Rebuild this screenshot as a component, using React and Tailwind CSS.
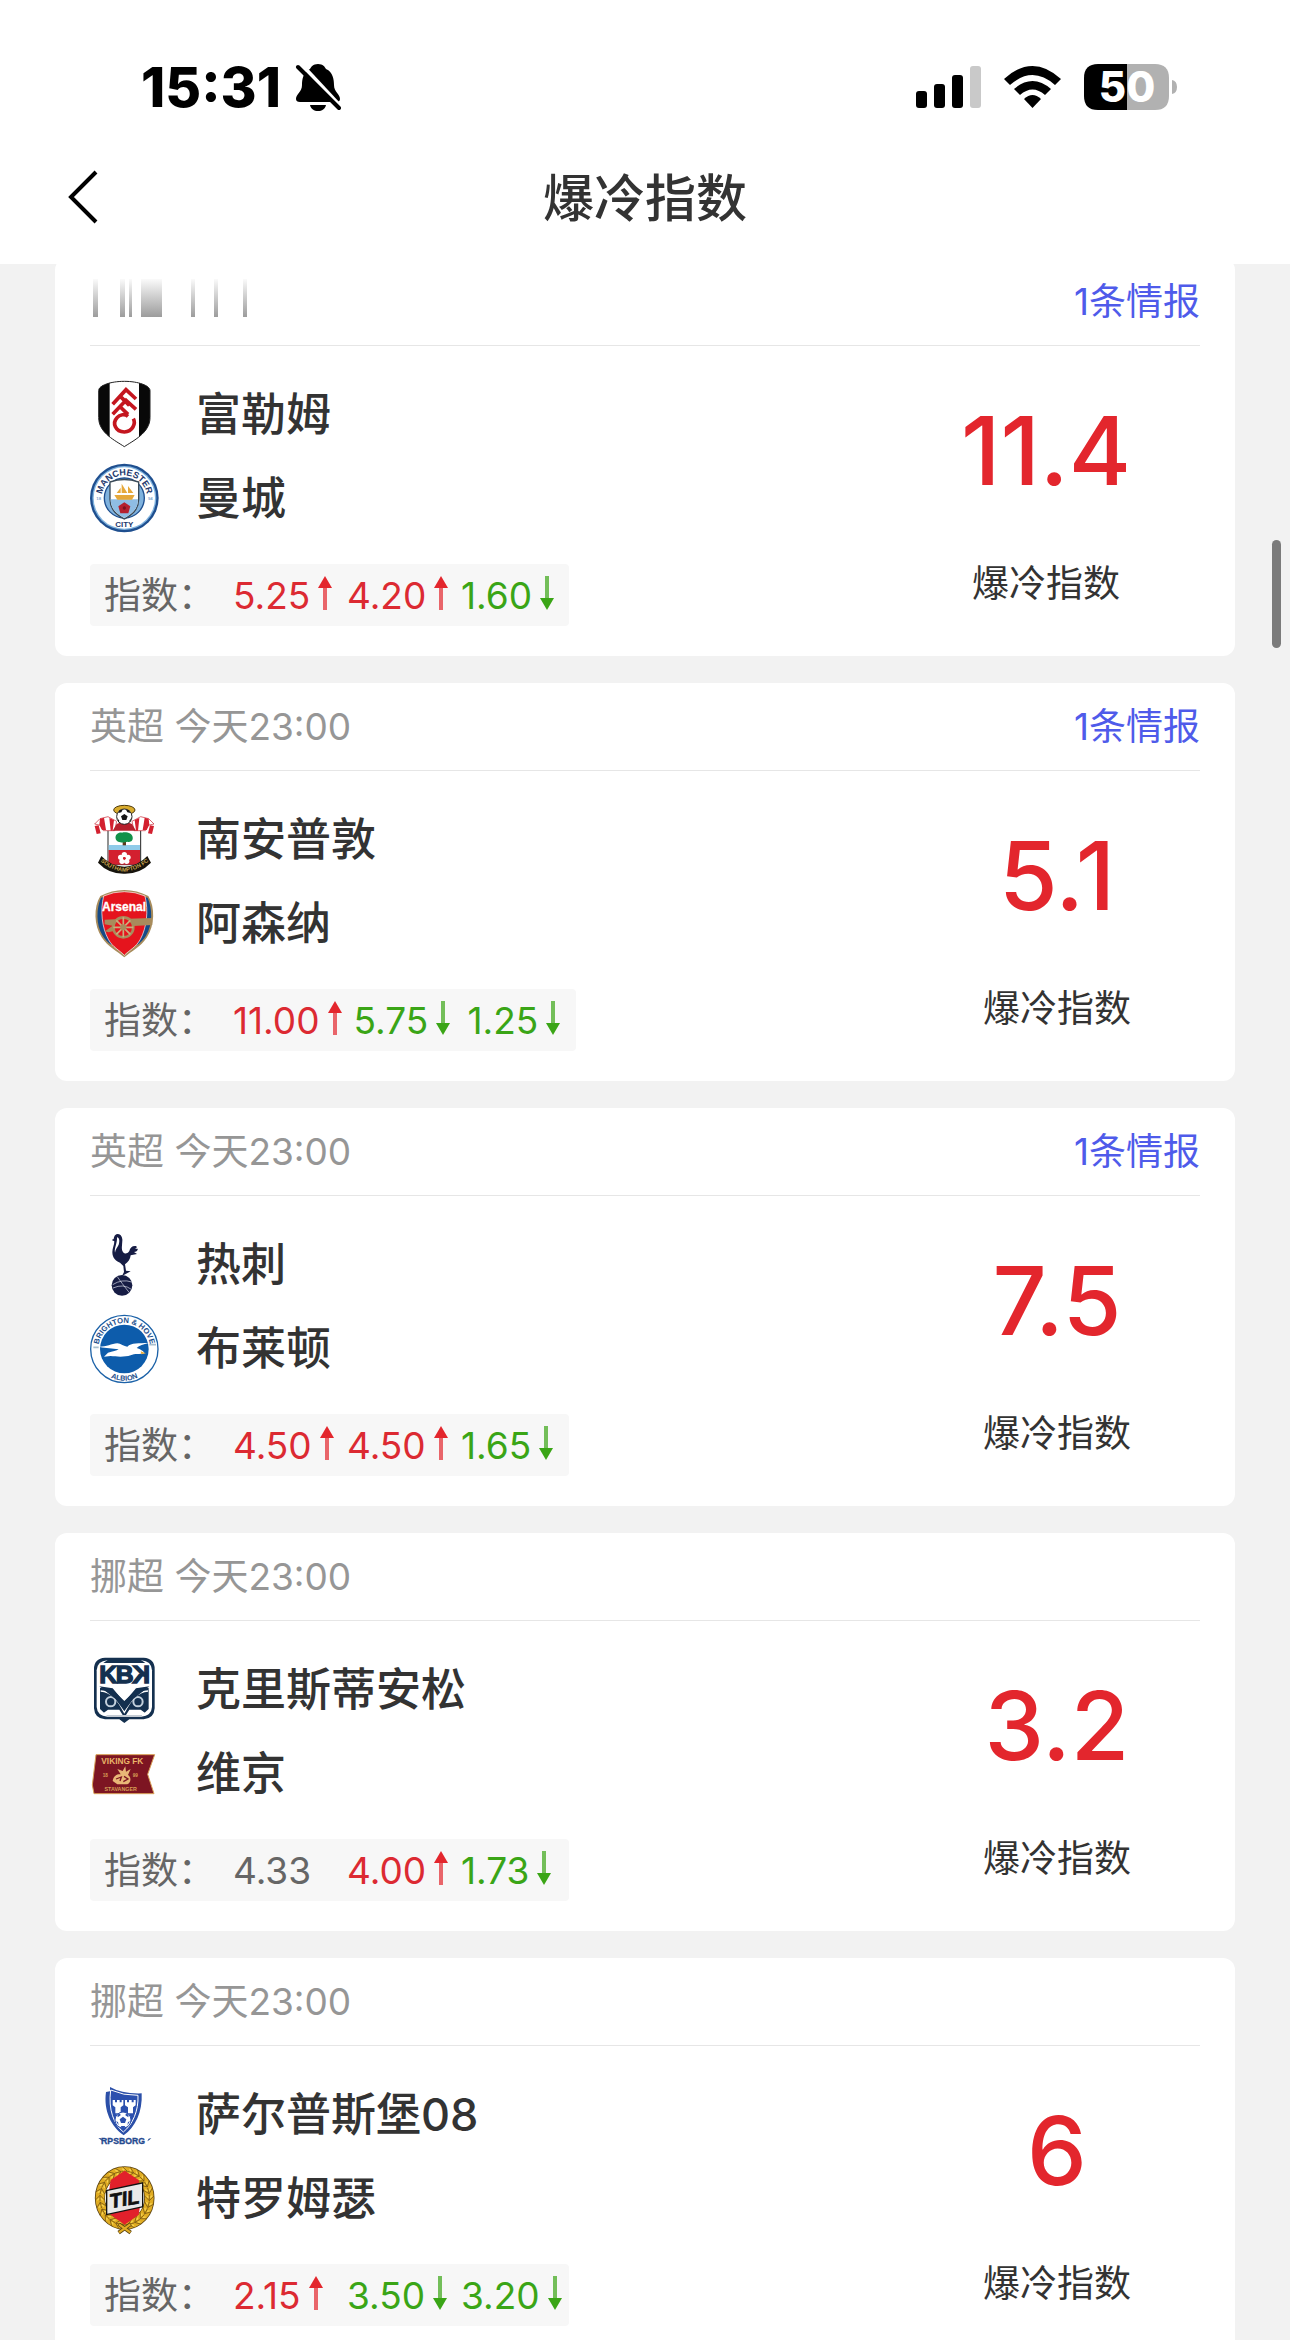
import { useState } from "react";

const matches = [
  {
    id: 1,
    league: null,
    intel: "1条情报",
    home: "富勒姆",
    away: "曼城",
    homeCrest: Fulham,
    awayCrest: ManCity,
    odds: [
      ["5.25", "up"],
      ["4.20", "up"],
      ["1.60", "down"],
    ],
    score: "11.4",
  },
  {
    id: 2,
    league: "英超 今天23:00",
    intel: "1条情报",
    home: "南安普敦",
    away: "阿森纳",
    homeCrest: Southampton,
    awayCrest: Arsenal,
    odds: [
      ["11.00", "up"],
      ["5.75", "down"],
      ["1.25", "down"],
    ],
    score: "5.1",
  },
  {
    id: 3,
    league: "英超 今天23:00",
    intel: "1条情报",
    home: "热刺",
    away: "布莱顿",
    homeCrest: Tottenham,
    awayCrest: Brighton,
    odds: [
      ["4.50", "up"],
      ["4.50", "up"],
      ["1.65", "down"],
    ],
    score: "7.5",
  },
  {
    id: 4,
    league: "挪超 今天23:00",
    home: "克里斯蒂安松",
    away: "维京",
    homeCrest: Kristiansund,
    awayCrest: Viking,
    odds: [
      ["4.33", null],
      ["4.00", "up"],
      ["1.73", "down"],
    ],
    score: "3.2",
  },
  {
    id: 5,
    league: "挪超 今天23:00",
    home: "萨尔普斯堡08",
    away: "特罗姆瑟",
    homeCrest: Sarpsborg,
    awayCrest: Tromso,
    odds: [
      ["2.15", "up"],
      ["3.50", "down"],
      ["3.20", "down"],
    ],
    score: "6",
  },
];

/* ---------- club crests ---------- */

function Crest({ top, label, children }) {
  return (
    <svg
      viewBox={`30 ${top} 210 210`}
      className="size-[70px] shrink-0 overflow-visible"
      role="img"
      aria-label={label}
      fontFamily="Liberation Sans, sans-serif"
      fontWeight="700"
    >
      {children}
    </svg>
  );
}

function Fulham() {
  const shield =
    "M56 58C57 44 90 31 133 31S209 44 210 58V140C210 186 158 210 133 227C108 210 56 186 56 140Z";
  return (
    <Crest top={24} label="Fulham">
      <clipPath id="fulham">
        <path d={shield} />
      </clipPath>
      <path d={shield} fill="#fff" />
      <g clipPath="url(#fulham)">
        <path d="M50 25H89V215H50zM177 25H220V215H177z" fill="#080808" />
      </g>
      <path d={shield} fill="none" stroke="#222" strokeWidth="3" />
      <g fill="none" stroke="#c4161f" strokeWidth="11">
        <path d="M98 100L138 56L168 84M121 76L148 103" />
        <path d="M98 130L138 88L168 115M121 108L144 130" />
        <path d="M160 143C168 158 158 181 133 183C106 183 96 156 111 140C119 130 135 128 144 136" />
      </g>
    </Crest>
  );
}

function ManCity() {
  return (
    <Crest top={276} label="Manchester City">
      <circle cx="133" cy="381" r="103" fill="#1f4f8f" />
      <circle cx="133" cy="381" r="96" fill="#7fb2de" />
      <circle cx="133" cy="381" r="92" fill="#fff" />
      <circle cx="133" cy="381" r="60" fill="#7fb2de" stroke="#1f4f8f" strokeWidth="4" />
      <path id="mcTop" d="M65 381A68 68 0 0 1 201 381" fill="none" />
      <text fontSize="27" fill="#253a6e" textAnchor="middle">
        <textPath href="#mcTop" startOffset="50%">MANCHESTER</textPath>
      </text>
      <path d="M90 333Q133 318 176 333V385C176 420 150 434 133 444C116 434 90 420 90 385Z" fill="#fff" stroke="#3b4a57" strokeWidth="4" />
      <path d="M92 385H174C174 418 150 431 133 441C116 431 92 418 92 385Z" fill="#8fbde4" />
      <path d="M103 372H164L156 386H112ZM110 366L122 350V366ZM125 366V338L142 366ZM144 366V345L160 366Z" fill="#e5a83b" />
      <path d="M133 394L151 406L145 427H121L115 406Z" fill="#b5202e" />
      <circle cx="133" cy="411" r="5" fill="#7a1220" />
      <text x="133" y="467" fontSize="24" fill="#253a6e" textAnchor="middle">CITY</text>
      <text x="56" y="386" fontSize="13" fill="#7fa6cf" textAnchor="middle">18</text>
      <text x="211" y="386" fontSize="13" fill="#7fa6cf" textAnchor="middle">94</text>
    </Crest>
  );
}

function Southampton() {
  return (
    <Crest top={24} label="Southampton">
      <path d="M84 100H182V206H84z" fill="#fff" stroke="#222" strokeWidth="3" />
      <path d="M86 147H180V162H86z" fill="#8fcbe9" />
      <path d="M86 162H180V206H86z" fill="#d3202f" />
      <path d="M128 130H138V148H128z" fill="#5c3a1e" />
      <path d="M107 128C104 116 116 108 126 110C138 106 158 112 158 124C160 136 150 140 142 137C132 141 110 141 107 128Z" fill="#12914a" />
      <g fill="#fff">
        <circle cx="133" cy="176" r="8" />
        <circle cx="122" cy="184" r="8" />
        <circle cx="144" cy="184" r="8" />
        <circle cx="126" cy="196" r="8" />
        <circle cx="140" cy="196" r="8" />
      </g>
      <circle cx="133" cy="187" r="4" fill="#d3202f" />
      <path d="M60 68L84 62L110 76L104 104L70 104L62 88L44 84Z" fill="#fff" stroke="#c9202e" strokeWidth="2" />
      <path d="M206 68L182 62L156 76L162 104L196 104L204 88L222 84Z" fill="#fff" stroke="#c9202e" strokeWidth="2" />
      <path d="M60 68L72 65L78 102H66L58 86ZM88 66L102 72L98 104H92ZM44 90L56 88L62 112L50 114ZM206 68L194 65L188 102H200L208 86ZM178 66L164 72L168 104H174ZM222 90L210 88L204 112L216 114Z" fill="#d3202f" />
      <path d="M110 84Q133 72 156 84L168 104H98Z" fill="#b71f2c" />
      <ellipse cx="133" cy="42" rx="32" ry="14" fill="#d9ac2e" stroke="#4e3a0d" strokeWidth="3" />
      <circle cx="133" cy="62" r="23" fill="#fff" stroke="#222" strokeWidth="3" />
      <path d="M133 54L143 61L139 72H127L123 61ZM119 42L128 41L124 49L115 51ZM147 42L138 41L142 49L151 51ZM112 66L118 74L116 80ZM154 66L148 74L150 80Z" fill="#151515" />
      <path d="M64 180Q92 210 133 212Q174 210 202 180L213 200Q180 234 133 233Q86 234 54 200Z" fill="#17140d" />
      <path id="saintsRibbon" d="M63 197Q94 224 133 227Q172 224 205 197" fill="none" />
      <text fontSize="17" fill="#c9a54c" textAnchor="middle">
        <textPath href="#saintsRibbon" startOffset="50%">SOUTHAMPTON FC</textPath>
      </text>
    </Crest>
  );
}

function Arsenal() {
  const shield =
    "M61 300Q95 282 133 282Q171 282 205 300C226 334 224 388 201 424C181 454 156 464 133 484C110 464 85 454 65 424C42 388 40 334 61 300Z";
  return (
    <Crest top={276} label="Arsenal">
      <path d={shield} fill="#a88c5c" />
      <path d="M63 305C49 336 47 385 68 419C75 430 85 440 95 447L84 390L74 303ZM203 305C217 336 219 385 198 419C191 430 181 440 171 447L182 390L192 303Z" fill="#164a86" />
      <path d="M71 300Q100 287 133 287Q166 287 195 300C206 345 200 395 181 430C168 454 148 462 133 478C118 462 98 454 85 430C66 395 60 345 71 300Z" fill="#e5141d" stroke="#fff" strokeWidth="2" />
      <path d="M74 371L120 369L216 366L217 387L160 390L86 409L75 406L98 389L74 385Z" fill="#a88c5c" />
      <circle cx="130" cy="394" r="30" fill="#e5141d" stroke="#a88c5c" strokeWidth="8" />
      <path d="M130 364V424M100 394H160M109 373L151 415M151 373L109 415" stroke="#c9ae7d" strokeWidth="5" />
      <circle cx="130" cy="394" r="9" fill="#a88c5c" />
      <text x="132" y="345" fontSize="36" fill="#fff" stroke="#fff" textAnchor="middle">Arsenal</text>
    </Crest>
  );
}

function Tottenham() {
  return (
    <Crest top={9} label="Tottenham Hotspur">
      <path d="M112 24C104 25 102 33 101 39L95 42L103 46C103 58 97 66 97 78C97 96 108 106 120 110L130 120L132 138L126 150L152 136L138 134L135 115C144 108 151 100 152 88L171 84L162 78C168 78 175 74 173 68L165 68C172 66 172 60 165 60C155 60 150 66 148 75C141 85 133 84 129 78C122 68 128 52 127 40C126 29 120 24 112 24Z" fill="#161c44" />
      <path d="M111 34C118 36 120 44 116 56C112 64 106 70 105 80C102 66 112 54 111 34Z" fill="#fff" />
      <circle cx="126" cy="178" r="31" fill="#161c44" />
      <path d="M98 176Q126 158 155 168M99 186Q130 172 154 190M112 152Q124 170 148 200" fill="none" stroke="#dfe2ee" strokeWidth="2" />
    </Crest>
  );
}

function Brighton() {
  return (
    <Crest top={261} label="Brighton & Hove Albion">
      <circle cx="133" cy="369" r="101" fill="#fff" stroke="#1c62a8" strokeWidth="4" />
      <circle cx="133" cy="369" r="73" fill="#0d5cab" />
      <path id="bhaTop" d="M55 369A78 78 0 0 1 211 369" fill="none" />
      <path id="bhaBottom" d="M38 369A95 95 0 0 0 228 369" fill="none" />
      <text fontSize="23" fill="#1d4f8c" textAnchor="middle">
        <textPath href="#bhaTop" startOffset="50%">BRIGHTON &amp; HOVE</textPath>
      </text>
      <text fontSize="22" fill="#1d4f8c" textAnchor="middle">
        <textPath href="#bhaBottom" startOffset="50%">ALBION</textPath>
      </text>
      <path d="M58 362C80 362 94 354 112 352C122 352 132 362 142 362C154 350 176 352 206 351C190 356 178 358 170 366C182 370 192 376 193 382C180 386 164 382 152 388C134 394 108 392 92 390L72 392L84 380C98 376 110 374 116 370C96 366 80 368 58 362Z" fill="#fff" />
      <path d="M182 376L198 382L184 385Z" fill="#e9ae44" />
      <path d="M40 364H56M208 356H228" stroke="#a9bfce" strokeWidth="5" />
    </Crest>
  );
}

function Kristiansund() {
  return (
    <Crest top={11} label="Kristiansund BK">
      <path d="M75 22H191Q224 24 224 56V174Q222 205 191 207H148L133 218L118 207H75Q44 205 42 174V56Q42 24 75 22Z" fill="#14304f" />
      <path d="M82 30H184Q214 32 216 60V170Q214 197 184 199H82Q52 197 50 170V60Q52 32 82 30Z" fill="#fff" />
      <path d="M84 28H182L196 38H70Z" fill="#14304f" />
      <g fill="#14304f" stroke="#14304f" strokeWidth="4" fontSize="74">
        <text x="58" y="98">K</text>
        <text x="107" y="98">B</text>
        <text x="-210" y="98" transform="scale(-1 1)">K</text>
      </g>
      <path d="M60 112L98 118L133 152L168 118L206 112V176L186 195H80L60 176Z" fill="#14304f" />
      <circle cx="92" cy="154" r="14" fill="#14304f" stroke="#c3d0dc" strokeWidth="6" />
      <circle cx="174" cy="154" r="14" fill="#14304f" stroke="#c3d0dc" strokeWidth="6" />
      <path d="M62 194L84 178H118L128 194ZM204 194L182 178H148L138 194Z" fill="#fff" />
      <path d="M62 122C94 124 112 146 133 186C154 146 172 124 204 122" fill="none" stroke="#fff" strokeWidth="4" />
      <path d="M58 108L98 114L133 156L168 114L208 108L160 146L133 182L106 146Z" fill="#14304f" />
    </Crest>
  );
}

function Viking() {
  return (
    <Crest top={263} label="Viking FK">
      <path d="M48 313H224L203 372L222 430H42L37 404Z" fill="#7d1522" stroke="#d8a057" strokeWidth="3" />
      <text x="127" y="342" fontSize="25" fill="#eab469" textAnchor="middle">VIKING FK</text>
      <text x="76" y="380" fontSize="14" fill="#d8a057" textAnchor="middle">18</text>
      <text x="166" y="380" fontSize="14" fill="#d8a057" textAnchor="middle">99</text>
      <path d="M98 392C100 376 112 370 122 372L112 356L128 362L136 348L138 364L152 356L144 374C154 380 154 396 142 402H112Z" fill="#e9b777" />
      <path d="M108 386L124 380L120 392M132 378L144 386L130 394" fill="none" stroke="#7d1522" strokeWidth="4" />
      <text x="122" y="422" fontSize="16" fill="#d8a057" textAnchor="middle">STAVANGER</text>
    </Crest>
  );
}

function Sarpsborg() {
  return (
    <Crest top={-3} label="Sarpsborg 08">
      <path d="M90 21Q126 42 185 40C188 96 166 142 131 166C94 140 70 92 78 36L90 34Z" fill="#2b4fa8" />
      <path d="M92 30Q130 47 174 46C176 92 158 134 130 156C102 134 84 90 92 30Z" fill="#2c50ae" stroke="#fff" strokeWidth="3" />
      <path d="M98 60H105V67H111V60H119V67H125V60H130V76L122 82V100H106V82L98 76ZM135 60H141V67H147V60H155V67H161V60H167V76L159 82V100H144V82L135 76Z" fill="#fff" />
      <circle cx="129" cy="120" r="24" fill="#fff" stroke="#2c50ae" strokeWidth="3" />
      <path d="M129 110L139 118L135 129H123L119 118ZM112 104L120 100L122 106L113 112ZM146 104L138 100L136 106L145 112ZM108 124L114 126L116 136ZM150 124L144 126L142 136ZM122 138H136L132 144H126Z" fill="#2c50ae" />
      <text x="129" y="192" fontSize="26" fill="#26498f" stroke="#26498f" textAnchor="middle">RPSBORG</text>
      <path d="M55 174L64 175L67 183ZM202 184L206 176L214 174L208 180Z" fill="#26498f" />
    </Crest>
  );
}

function Tromso() {
  const leaves = Array.from({ length: 24 }, (_, i) => i * 15);
  return (
    <Crest top={249} label="Tromsø IL">
      <ellipse cx="134" cy="354" rx="74" ry="80" fill="none" stroke="#5b4312" strokeWidth="31" />
      <ellipse cx="134" cy="354" rx="74" ry="80" fill="none" stroke="#e0ac22" strokeWidth="26" />
      {leaves.map((deg) => {
        const a = (deg * Math.PI) / 180;
        const x = 134 + 74 * Math.cos(a);
        const y = 354 + 80 * Math.sin(a);
        return (
          <g key={deg} transform={`translate(${x} ${y}) rotate(${deg})`}>
            <path d="M-14 -6L0 8L14 -6M0 8V-10" fill="none" stroke="#6b4d10" strokeWidth="2" />
            <path d="M-8 -7L-3 -1M8 -7L3 -1" stroke="#f6d350" strokeWidth="4" />
          </g>
        );
      })}
      <path d="M116 432L152 458M152 432L116 458" stroke="#5b4312" strokeWidth="12" />
      <path d="M117 433L151 457M151 433L117 457" stroke="#e0ac22" strokeWidth="7" />
      <ellipse cx="134" cy="354" rx="58" ry="66" fill="#fff" />
      <path d="M134 272L176 300L184 354L176 404L134 434L92 404L84 354L92 300Z" fill="#e2202b" />
      <path d="M78 330L190 306V382L78 406Z" fill="#111" />
      <path d="M82 333L186 311V379L82 401Z" fill="#e9e9e9" />
      <text x="133" y="377" fontSize="60" fontStyle="italic" fill="#111" stroke="#111" strokeWidth="2" textAnchor="middle" transform="rotate(-10 134 356)">TIL</text>
    </Crest>
  );
}

/* ---------- status bar ---------- */

const StatusBar = () => {
  return (
    <div className="flex h-[132px] items-center justify-between pt-[42px] pr-[112px] pl-[141px] text-black">
      <div className="flex items-center gap-[14px]">
        <span className="text-[55px] leading-none font-extrabold">15:31</span>
        <svg viewBox="0 0 46 48" className="h-12 w-[46px]" aria-label="静音">
          <path d="M23 1C28 1 30 4 31 6C38 9 39 17 39 22C39 29 45 31 45 36Q45 39 41 39H5Q1 39 1 36C1 31 7 29 7 22C7 17 8 9 15 6C16 4 18 1 23 1Z" />
          <path d="M15 42H31C30 46 27 48 23 48S16 46 15 42Z" />
          <path d="M6 1L48 46" stroke="#fff" strokeWidth="4" />
          <path d="M3 4L44 45" stroke="#000" strokeWidth="4" strokeLinecap="round" />
        </svg>
      </div>
      <div className="flex items-center gap-[23px]">
        <svg viewBox="0 0 65 42" className="h-[42px] w-[65px]" aria-label="信号">
          <rect x="0" y="25" width="11" height="17" rx="3" />
          <rect x="18" y="18" width="11" height="24" rx="3" />
          <rect x="36" y="9" width="11" height="33" rx="3" />
          <rect x="54" y="0" width="11" height="42" rx="3" fill="#c9c9c9" />
        </svg>
        <svg viewBox="0 0 57 42" className="h-[42px] w-[57px]" aria-label="Wi-Fi">
          <path d="M0 13Q28.500 -13 57 13L51 19Q28.500 -1 6 19Z" />
          <path d="M10 23Q28.500 7 47 23L41 29Q28.500 18 16 29Z" />
          <path d="M20 33Q28.500 25 37 33L28.500 42Z" />
        </svg>
        <svg viewBox="0 0 94 46" className="h-[46px] w-[94px] overflow-visible" aria-label="电量">
          <path d="M43 0H14Q0 0 0 14V32Q0 46 14 46H43Z" />
          <path d="M43 0H71Q85 0 85 14V32Q85 46 71 46H43Z" fill="#b1b1b1" />
          <path d="M88 16Q93 17 93 23T88 30Z" fill="#b1b1b1" />
          <text x="43" y="38" fill="#fff" fontSize="42" fontWeight="800" textAnchor="middle">50</text>
        </svg>
      </div>
    </div>
  );
};

const NavBar = () => {
  return (
    <div className="grid h-[132px] grid-cols-[1fr_auto_1fr] items-center px-[67px]">
      <button type="button" aria-label="返回" className="w-8">
        <svg viewBox="0 0 32 56" className="h-14 w-8" fill="none" stroke="#000" strokeWidth="4">
          <path d="M29 2L4 27L29 52" />
        </svg>
      </button>
      <h1 className="text-[51px] leading-none font-medium text-[#333]">爆冷指数</h1>
    </div>
  );
};

/* ---------- match card ---------- */

const Arrow = ({ dir }) => {
  const up = dir === "up";
  return (
    <svg viewBox="0 0 16 36" className="mb-1 h-9 w-4 shrink-0" fill={up ? "#e3262d" : "#3aa516"}>
      {up ? (
        <>
          <path d="M8 1L15 13H1Z" />
          <path d="M6 13H10V35H6z" opacity="0.700" />
        </>
      ) : (
        <>
          <path d="M8 35L15 23H1Z" />
          <path d="M6 1H10V23H6z" opacity="0.700" />
        </>
      )}
    </svg>
  );
};

const oddColor = (dir) => {
  if (dir === "up") return "text-[#dc2a32]";
  if (dir === "down") return "text-[#3aa516]";
  return "text-[#666]";
};

// half rendered league label at the top of the scrolled list
const LeagueSmear = () => {
  const bars = [
    [3, 5],
    [30, 5],
    [39, 3],
    [51, 21],
    [101, 4],
    [124, 4],
    [153, 4],
  ];
  return (
    <svg viewBox="0 0 258 38" className="mb-2 h-[38px] w-[258px]">
      <linearGradient id="smear" x1="0" y1="0" x2="0" y2="1">
        <stop offset="0" stopColor="#fafafa" />
        <stop offset="1" stopColor="#9c9c9c" />
      </linearGradient>
      {bars.map(([x, w]) => (
        <rect key={x} x={x} y="0" width={w} height="38" fill="url(#smear)" />
      ))}
    </svg>
  );
};

const Team = ({ crest: CrestIcon, name }) => {
  return (
    <div className="flex items-center gap-9">
      <CrestIcon />
      <span className="text-[45px] leading-none font-medium text-[#333]">{name}</span>
    </div>
  );
};

const MatchCard = ({ match }) => {
  return (
    <article className="rounded-xl bg-white px-[35px] pb-[30px]">
      <div className="flex h-[88px] items-center justify-between border-b border-[#e6e6e6] text-[37px] leading-none">
        {match.league ? <span className="text-[#969696]">{match.league}</span> : <LeagueSmear />}
        {match.intel && (
          <a href="#intel" className="text-[#4f5bea]">
            {match.intel}
          </a>
        )}
      </div>

      <div className="flex justify-between pt-[33px]">
        <div>
          <div className="flex flex-col gap-[14px]">
            <Team crest={match.homeCrest} name={match.home} />
            <Team crest={match.awayCrest} name={match.away} />
          </div>
          <div className="mt-[31px] flex h-[62px] items-center rounded bg-[#f7f7f7] pl-[14px] text-[37px] leading-none">
            <span className="w-[129px] text-[#666]">指数：</span>
            <div className="flex gap-[6px]">
              {match.odds.map(([value, dir], i) => (
                <span key={i} className={`flex min-w-[108px] items-center gap-[7px] pr-[5px] ${oddColor(dir)}`}>
                  {value}
                  {dir && <Arrow dir={dir} />}
                </span>
              ))}
            </div>
          </div>
        </div>

        <div className="mr-[69px] flex flex-col items-center pt-6">
          <span className="text-[95px] leading-[96px] font-medium text-[#e3262d]">{match.score}</span>
          <span className="mt-[66px] text-[37px] leading-none text-[#333]">爆冷指数</span>
        </div>
      </div>
    </article>
  );
};

const App = () => {
  const [list] = useState(matches);

  return (
    <div className="relative flex h-screen flex-col overflow-hidden bg-[#f2f2f2] font-['Inter','Noto_Sans_CJK_SC',sans-serif]">
      <header className="shrink-0 bg-white">
        <StatusBar />
        <NavBar />
      </header>

      <main className="min-h-0 flex-1 overflow-y-auto px-[55px] [scrollbar-width:none]">
        <div className="-mt-[6px] flex flex-col gap-[27px] pb-[27px]">
          {list.map((match) => (
            <MatchCard key={match.id} match={match} />
          ))}
        </div>
      </main>

      <div className="absolute top-[540px] right-[9px] h-[108px] w-[9px] rounded-full bg-[#7b7b7b]" />
    </div>
  );
};

export default App;
